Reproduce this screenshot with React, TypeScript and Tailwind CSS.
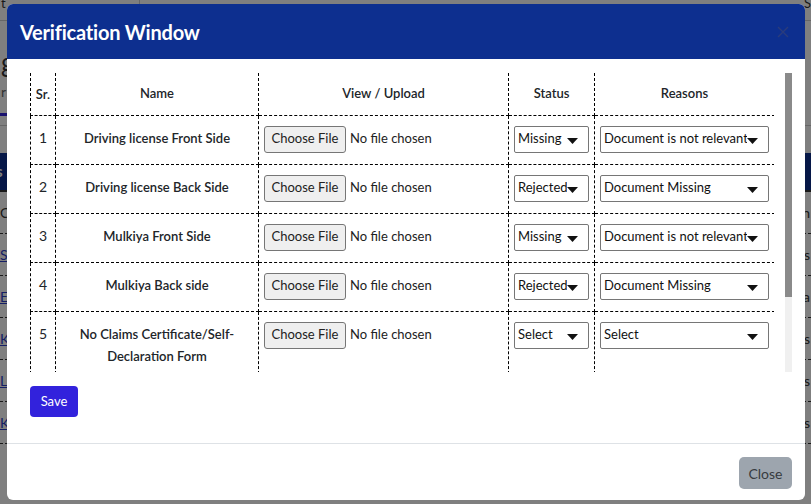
import React from "react";

type Row = {
  sr: number;
  name: string;
  status: string;
  reason: string;
};

const ROWS: Row[] = [
  { sr: 1, name: "Driving license Front Side", status: "Missing", reason: "Document is not relevant" },
  { sr: 2, name: "Driving license Back Side", status: "Rejected", reason: "Document Missing" },
  { sr: 3, name: "Mulkiya Front Side", status: "Missing", reason: "Document is not relevant" },
  { sr: 4, name: "Mulkiya Back side", status: "Rejected", reason: "Document Missing" },
  { sr: 5, name: "No Claims Certificate/Self-Declaration Form", status: "Select", reason: "Select" },
];

const font = "font-['Lato','Open_Sans',sans-serif]";

// dashed cell borders, the table draws them on the right / bottom of each cell
const cell = "border-r border-b border-dashed border-black align-top";

function Caret() {
  return (
    <svg width="11" height="6" viewBox="0 0 11 6" className="mt-[3px] shrink-0">
      <path d="M0 0h11L5.5 6z" fill="#111" />
    </svg>
  );
}

function FakeSelect({ value, width }: { value: string; width: string }) {
  return (
    <div
      className={`${width} flex h-[27px] items-center rounded-[2px] border border-[#767676] bg-white pl-[3px] pr-[10px] text-[13px] leading-none text-[#111]`}
    >
      <span className="min-w-0 flex-1 overflow-hidden whitespace-nowrap pb-[2px]">{value}</span>
      <Caret />
    </div>
  );
}

function FilePicker() {
  return (
    <div className="flex items-center gap-[4px] text-[13px] text-[#222]">
      <span className="flex h-[27px] w-[82px] items-center justify-center rounded-[3px] border border-[#767676] bg-[#efefef]">
        Choose File
      </span>
      <span>No file chosen</span>
    </div>
  );
}

/** What shows of the page behind the backdrop. */
function BackgroundPage() {
  const lines = [
    ["C", "n", false],
    ["S", "s", true],
    ["E", "a", true],
    ["K", "s", true],
    ["L", "s", true],
    ["K", "s", true],
  ] as const;
  return (
    <div className={`flex h-[504px] w-[811px] flex-col bg-white text-[14px] text-[#333] ${font}`}>
      <div className="flex h-[21px] items-start border-b border-[#ccc] text-[13px]">
        <span className="-mt-[6px] w-[140px] border-r border-[#ccc] pl-[1px]">t</span>
        <span className="-mt-[6px] flex-1 border-r border-[#ccc]" />
        <span className="-mt-[6px] pl-[2px]">S</span>
      </div>
      <div className="mt-[26px] h-[30px] pl-[1px] text-[26px] leading-[30px]">g</div>
      <div className="mt-[4px] h-[20px] pl-[1px] text-[14px] text-[#666]">r</div>
      <div className="mt-[12px] h-[3px] w-[120px] bg-[#3222dc]" />
      <div className="mt-[9px] h-px bg-[#ccc]" />
      <div className="mt-[27px] flex h-[37px] items-center justify-between bg-[#0d2f8f] px-0 text-[15px] font-bold text-white">
        <span className="-ml-[4px]">s</span>
        <span />
      </div>
      <div className="h-[2px] bg-[#333]" />
      {lines.map(([l, r, link], i) => (
        <div
          key={i}
          className="flex h-[42px] items-center justify-between border-b border-dashed border-[#333]"
        >
          <span className={link ? "text-[#2a3cc8] underline" : ""}>{l}</span>
          <span className="pr-[1px]">{r}</span>
        </div>
      ))}
    </div>
  );
}

export default function App() {
  return (
    <div className={`relative h-[504px] w-[811px] overflow-hidden ${font}`}>
      <BackgroundPage />
      {/* backdrop */}
      <div className="absolute inset-0 bg-[rgba(0,0,0,0.5)]" />

      {/* modal */}
      <div className="absolute left-[7px] top-[4px] flex h-[496px] w-[798px] flex-col overflow-hidden rounded-[6px] bg-white">
        <div className="flex h-[55px] shrink-0 items-center justify-between bg-[#0d2f8f] pl-[13px] pr-[16px]">
          <h2 className="m-0 text-[20px] font-bold tracking-[-0.2px] text-white">
            Verification Window
          </h2>
          <svg width="12" height="12" viewBox="0 0 12 12">
            <path d="M1 1l10 10M11 1L1 11" stroke="#2a3c7c" strokeWidth="1.4" />
          </svg>
        </div>

        <div className="flex flex-col pl-[23px] pr-[13px] pt-[14px] pb-[26px]">
          <div className="flex h-[299px] items-start gap-[11px]">
            <div className="h-[299px] w-[744px] overflow-hidden">
              <table className="w-[744px] table-fixed border-collapse text-[#212529]">
                <colgroup>
                  <col className="w-[25px]" />
                  <col className="w-[203px]" />
                  <col className="w-[250px]" />
                  <col className="w-[86px]" />
                  <col className="w-[180px]" />
                </colgroup>
                <thead>
                  <tr className="h-[42px] text-[13px] font-semibold">
                    <th className="border-l border-r border-b border-dashed border-black pt-[1px] align-middle font-semibold">
                      Sr.
                    </th>
                    <th className="border-r border-b border-dashed border-black align-middle font-semibold">Name</th>
                    <th className="border-r border-b border-dashed border-black align-middle font-semibold">View / Upload</th>
                    <th className="border-r border-b border-dashed border-black align-middle font-semibold">Status</th>
                    <th className="border-r border-b border-dashed border-black align-middle font-semibold">Reasons</th>
                  </tr>
                </thead>
                <tbody>
                  {ROWS.map((row) => (
                    <tr key={row.sr} className="h-[49px]">
                      <td className={`${cell} border-l pt-[11px] text-center text-[14px] leading-[22px]`}>
                        {row.sr}
                      </td>
                      <td className={`${cell} px-[14px] pt-[11px] pb-[6px] text-center text-[13px] font-semibold leading-[22px]`}>
                        {row.name}
                      </td>
                      <td className={`${cell} pl-[5px] pt-[10px]`}>
                        <FilePicker />
                      </td>
                      <td className={`${cell} pl-[5px] pt-[10px]`}>
                        <FakeSelect value={row.status} width="w-[75px]" />
                      </td>
                      <td className={`${cell} pl-[5px] pt-[10px]`}>
                        <FakeSelect value={row.reason} width="w-[169px]" />
                      </td>
                    </tr>
                  ))}
                </tbody>
              </table>
            </div>
            {/* scrollbar */}
            <div className="flex h-[299px] w-[7px] flex-col bg-[#f0f0f0]">
              <div className="h-[224px] bg-[#8a8a8a]" />
            </div>
          </div>

          <div className="mt-[14px]">
            <button className="h-[31px] w-[48px] rounded-[4px] bg-[#3222dc] text-[13px] text-white">
              Save
            </button>
          </div>
        </div>

        <div className="flex flex-1 items-start justify-end border-t border-[#dee2e6] pr-[13px] pt-[13px]">
          <button className="h-[32px] w-[53px] rounded-[5px] bg-[#9da5ae] text-[14px] text-[#373b40]">
            Close
          </button>
        </div>
      </div>
    </div>
  );
}
